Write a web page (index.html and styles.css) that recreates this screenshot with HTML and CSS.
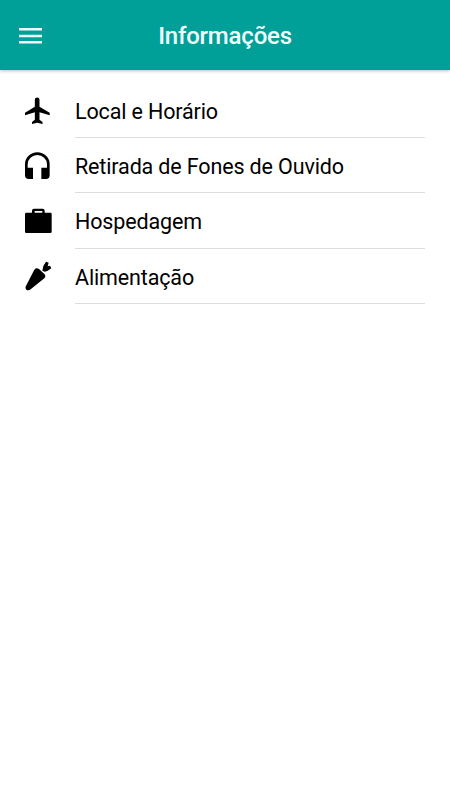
FILE: index.html
```html
<!DOCTYPE html>
<html lang="pt-BR">
<head>
<meta charset="utf-8">
<title>Informações</title>
<link rel="stylesheet" href="styles.css">
</head>
<body>
<header class="bar">
  <svg class="menu" viewBox="0 0 23 16"><path d="M0 0h23v2.500H0zM0 6.700h23v2.500H0zM0 13h23v2.500H0z"/></svg>
  <h1 class="title">Informações</h1>
</header>
<ul class="list">
  <li class="item">
    <svg class="icon" viewBox="21 17 90 90"><path d="M59.500 28c0-9 14-9 14 0v21l30.500 18v8L73.500 66v22l9 7v6l-16-4-15.500 4v-6l8.500-7V66l-29.500 9v-8l29.500-18z"/></svg>
    <span class="label">Local e Horário</span>
  </li>
  <li class="item">
    <svg class="icon" viewBox="21 18 90 90"><path d="M30 58a37 36 0 0 1 74 0v33q0 11-11 11H79V68h17V58a29 28 0 0 0-58 0v10h16v34H41q-11 0-11-11z"/></svg>
    <span class="label">Retirada de Fones de Ouvido</span>
  </li>
  <li class="item">
    <svg class="icon" viewBox="21 19 90 90"><path d="M34 39h17v-6q0-6 6-6h26q6 0 6 6v6h17q4 0 4 4v53q0 4-4 4H34q-4 0-4-4V43q0-4 4-4m25 0h23v-5H59z"/></svg>
    <span class="label">Hospedagem</span>
  </li>
  <li class="item">
    <svg class="icon" viewBox="21 20 90 90"><path d="M58 46q6-7 14-2l16 15q6 6 0 13l-41 33q-7 5-13 1-5-5 0-13zM82 49l3-14 8-13 8 3-3 11 7-2 4 8-12 8-8 2z"/></svg>
    <span class="label">Alimentação</span>
  </li>
</ul>
</body>
</html>
```
FILE: styles.css
```css
body { margin: 0; background: #fff; color: #000; font-family: Roboto, sans-serif; }
.bar { display: grid; grid-template-columns: 60px 1fr 60px; align-items: center; height: 70px; background: #009f98; box-shadow: 0 1px 3px rgba(0,60,60,.3); }
.menu { width: 23px; height: 16px; margin: 2px 0 0 18.500px; fill: #eaffff; }
.title { margin: 0; padding-top: 2px; text-align: center; color: #f0ffff; font-size: 24px; line-height: 34px; font-weight: 500; letter-spacing: -.2px; }
.list { list-style: none; margin: 0; padding: 13px 25px 0 22px; }
.item { display: grid; grid-template-columns: 53px 1fr; align-items: center; height: 55.2px; }
.icon { width: 30px; height: 30px; }
.label { box-sizing: border-box; height: 55.2px; line-height: 57px; font-size: 21.5px; letter-spacing: -.14px; border-bottom: 1px solid #ddd; }
```
